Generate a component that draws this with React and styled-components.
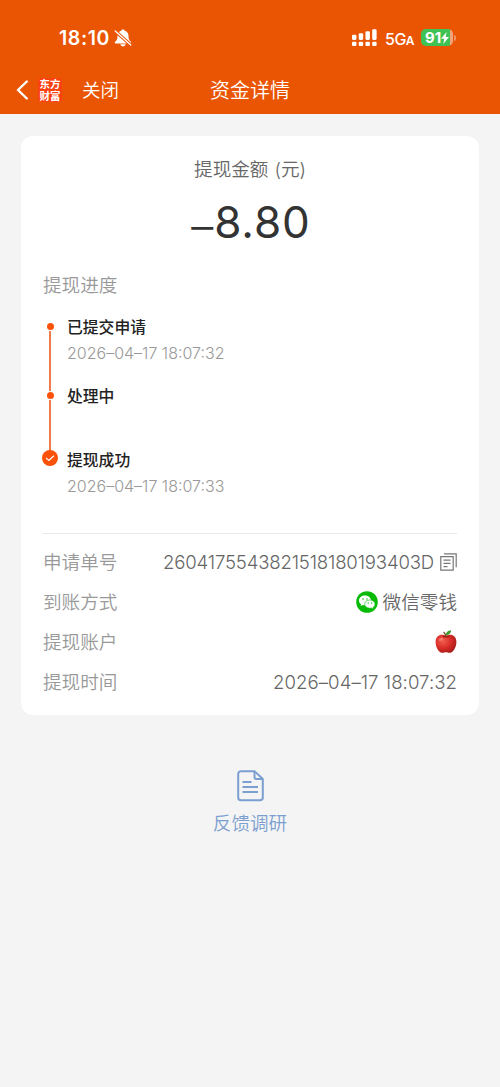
import React from 'react'
import styled, { createGlobalStyle } from 'styled-components'

const GlobalStyle = createGlobalStyle`
  * {
    box-sizing: border-box;
  }
  body {
    margin: 0;
    background: #f4f4f4;
    font-family: Inter, "Noto Sans CJK SC", sans-serif;
  }
  svg {
    display: block;
    flex: none;
  }
`

const Page = styled.div`
  min-height: 1087px;
  background: #f4f4f4;
`

const Header = styled.header`
  height: 114px;
  background: #ea5504;
  color: #fff;
`

const StatusBar = styled.div`
  display: flex;
  align-items: center;
  height: 64px;
  padding: 11px 44px 0 59px;
`

const Clock = styled.span`
  width: 52px;
  margin-right: 3px;
  font-size: 19.5px;
  font-weight: 600;
  letter-spacing: 0.6px;
  white-space: nowrap;
`

const StatusRight = styled.div`
  display: flex;
  align-items: center;
  margin-left: auto;
`

const Network = styled.span`
  width: 28px;
  margin: 2px 8px 0 8px;
  font-size: 16px;
  font-weight: 500;
  letter-spacing: -0.5px;
  white-space: nowrap;

  small {
    font-size: 12px;
    font-weight: 600;
  }
`

const Battery = styled.div`
  display: flex;
  align-items: center;
  justify-content: center;
  width: 32px;
  height: 17px;
  border-radius: 5px;
  background: linear-gradient(90deg, #3fc254 91%, #f0a27a 91%);
  font-size: 15px;
  font-weight: 700;
  letter-spacing: -0.2px;
`

const BatteryCap = styled.i`
  width: 2px;
  height: 6px;
  margin-left: 1px;
  border-radius: 0 2px 2px 0;
  background: #f0935f;
`

const NavBar = styled.nav`
  display: grid;
  grid-template-columns: 1fr auto 1fr;
  align-items: center;
  height: 50px;
  padding: 0 16px;
`

const NavLeft = styled.div`
  display: flex;
  align-items: center;
  padding-top: 1px;
`

const Logo = styled.div`
  display: flex;
  flex-direction: column;
  align-items: center;
  justify-content: center;
  width: 24px;
  height: 24px;
  margin: 0 20px 0 9px;
  border-radius: 4px;
  background: #fb4011;
  font-family: "Noto Sans CJK SC", sans-serif;
  font-size: 10.5px;
  font-weight: 700;
  white-space: nowrap;

  span {
    height: 11.5px;
    line-height: 11.5px;
  }
`

const Close = styled.span`
  font-size: 18.5px;
  font-weight: 350;
  line-height: 28px;
`

const Title = styled.h1`
  margin: 0;
  padding-top: 3px;
  font-size: 20px;
  font-weight: 350;
  line-height: 28px;
`

const Card = styled.main`
  height: 579px;
  margin: 22px 21px 0;
  padding: 0 22px;
  border-radius: 12px;
  background: #fff;
`

const AmountLabel = styled.div`
  display: flex;
  justify-content: center;
  gap: 6px;
  height: 66px;
  color: #666;
  font-size: 18.6px;
  font-weight: 350;
  line-height: 66px;
`

const Amount = styled.div`
  height: 40px;
  padding-left: 2px;
  color: #333;
  font-size: 44px;
  line-height: 40px;
  letter-spacing: 0.9px;
  text-align: center;
`

const Minus = styled.span`
  font-weight: 350;
  line-height: 0;
  vertical-align: -4px;
`

const SectionTitle = styled.h2`
  height: 30px;
  margin: 28px 0 14px;
  color: #999;
  font-size: 18.6px;
  font-weight: 350;
  line-height: 30px;
`

const Timeline = styled.div`
  height: 219px;
`

const Step = styled.div`
  display: flex;
  height: ${(p) => p.$height}px;
`

const Marker = styled.div`
  display: flex;
  flex-direction: column;
  align-items: center;
  width: 14px;
  margin-right: 10px;
  padding-top: ${(p) => (p.$done ? 3 : 9)}px;
`

const Dot = styled.i`
  width: 7px;
  height: 7px;
  border-radius: 50%;
  background: #fc5108;
`

const Line = styled.i`
  flex: 1;
  width: 1.5px;
  margin: 1px 0 ${(p) => (p.$last ? -4 : -8)}px;
  background: #f17b4b;
`

const StepTitle = styled.div`
  height: 26px;
  color: #222;
  font-size: 15.8px;
  font-weight: 500;
  line-height: 28px;
`

const StepTime = styled.div`
  color: #999;
  font-size: 16px;
  font-weight: 300;
  line-height: 26px;
`

const Details = styled.dl`
  margin: 0;
  padding-top: 8px;
  border-top: 1px solid #e8e8e8;
`

const Row = styled.div`
  display: flex;
  align-items: center;
  justify-content: space-between;
  height: 40px;
  font-size: 18.6px;
  font-weight: 350;
`

const Label = styled.dt`
  color: #999;
  line-height: 26px;
  padding-bottom: 1px;
`

const Value = styled.dd`
  display: flex;
  align-items: center;
  gap: ${(p) => p.$gap || 5}px;
  margin: 0;
  color: #666;
  letter-spacing: ${(p) => p.$spacing || 0}px;
`

const Method = styled.span`
  padding-bottom: 1px;
  line-height: 26px;
`

const Feedback = styled.a`
  display: flex;
  flex-direction: column;
  align-items: center;
  margin-top: 55px;
  color: #7b9fd0;
  font-size: 18.6px;
  font-weight: 350;
  line-height: 29px;

  svg {
    margin-bottom: 7px;
  }
`

const BellOff = () => (
  <svg width="18" height="18" viewBox="0 0 18 18">
    <path d="M9 .6c-1 0-1.600.5-1.700 1.200C4.600 2.700 3.500 4.600 3.500 7.200c0 3-.7 4.100-2.400 5.500-.6.6-.4 1.700.6 1.700h14.600c1 0 1.200-1.100.6-1.700C15.200 11.300 14.500 10.200 14.500 7.200c0-2.600-1.100-4.500-3.800-5.400C10.600 1.100 10 .6 9 .6z" fill="#fff" />
    <path d="M6.400 15.300h5.200c-.3 1.300-1.300 2.100-2.600 2.100s-2.300-.8-2.600-2.100z" fill="#fff" />
    <path d="M.5 1.500l17 15" stroke="#ea5504" strokeWidth="3.200" />
    <path d="M1.200 1.900l15.600 14.200" stroke="#fff" strokeWidth="1.300" strokeLinecap="round" />
  </svg>
)

const signalBars = [
  { x: 0, y: 5.5 },
  { x: 7, y: 4 },
  { x: 14, y: 2 },
  { x: 21, y: 0 },
]

const Signal = () => (
  <svg width="25" height="18" viewBox="0 0 26 18" fill="#fff">
    {signalBars.map((b) => (
      <React.Fragment key={b.x}>
        <rect x={b.x} y={b.y} width="4.600" height={11 - b.y} rx="1.200" />
        <rect x={b.x} y="12.800" width="4.600" height="4.600" rx="1.200" />
      </React.Fragment>
    ))}
  </svg>
)

const Bolt = () => (
  <svg width="8" height="12" viewBox="0 0 8 12">
    <path d="M5.600 0L0 6.800h3.200L2.300 12 8 5H4.700z" fill="#fff" />
  </svg>
)

const Back = () => (
  <svg width="13" height="20" viewBox="0 0 13 20" fill="none">
    <path d="M10.800 1.500L2 10l8.800 8.500" stroke="#fff" strokeWidth="2.400" strokeLinecap="round" strokeLinejoin="round" />
  </svg>
)

const Check = () => (
  <svg width="16" height="16" viewBox="0 0 16 16" fill="none">
    <circle cx="8" cy="8" r="8" fill="#fc5108" />
    <path d="M4.200 8l2.700 2.500 5-4.700" stroke="#fff" strokeWidth="1.200" />
  </svg>
)

const Copy = () => (
  <svg width="17" height="18" viewBox="0 0 17 18" fill="none" stroke="#777" strokeWidth="1.200">
    <path d="M4 .8h12.200v13.400" />
    <path d="M.8 3.600h12.400v13.600H.8z" />
    <path d="M3.500 7.200h7M3.500 10.400h7M3.500 13.600h4" />
  </svg>
)

const WeChat = () => (
  <svg width="22" height="22" viewBox="0 0 22 22">
    <circle cx="11" cy="11" r="10.800" fill="#09bb07" />
    <path d="M9 4.600c-3.400 0-6 2.100-6 4.900 0 1.600.8 2.900 2.100 3.800l-.5 1.800 2.100-1.100c.7.2 1.500.3 2.300.3 3.400 0 6-2.100 6-4.800S12.400 4.600 9 4.600z" fill="#fff" />
    <path d="M13.900 9c-3 0-5.200 1.800-5.200 4.100s2.200 4.100 5.200 4.100c.6 0 1.300-.1 1.800-.2l1.800.9-.4-1.500c1.200-.8 1.900-1.900 1.900-3.300 0-2.300-2.200-4.100-5.100-4.100z" fill="#fff" stroke="#09bb07" strokeWidth=".6" />
    <g fill="#09bb07">
      <circle cx="7" cy="8" r=".75" />
      <circle cx="11" cy="8" r=".75" />
      <circle cx="12.200" cy="12" r=".65" />
      <circle cx="15.600" cy="12" r=".65" />
    </g>
  </svg>
)

const Apple = () => (
  <svg width="22" height="24" viewBox="0 0 22 24">
    <defs>
      <radialGradient id="skin" cx=".35" cy=".35" r=".75">
        <stop offset="0" stopColor="#f2604f" />
        <stop offset=".5" stopColor="#db2f2a" />
        <stop offset="1" stopColor="#a31a15" />
      </radialGradient>
    </defs>
    <path d="M11 6C7.500 3.400.6 4.200.6 11.900c0 5.500 3.400 10.900 7 10.900 1.500 0 2-.5 3.400-.5s1.900.5 3.400.5c3.600 0 7-5.400 7-10.900C21.400 4.200 14.500 3.400 11 6z" fill="url(#skin)" />
    <ellipse cx="11" cy="6.500" rx="3.600" ry="1.100" fill="#a81c14" />
    <path d="M11 7C10.900 5 9.900 3.300 8.600 2" stroke="#6b4421" strokeWidth="1.200" fill="none" />
    <path d="M10.900 5.200C10.700 2.400 12.800.7 16 .3c.1 2.800-1.800 4.900-5.100 4.900z" fill="#3d9a2d" />
    <ellipse cx="6" cy="9.300" rx="2.200" ry="1.200" fill="#ffb6a8" opacity=".5" transform="rotate(-25 6 9.300)" />
  </svg>
)

const Document = () => (
  <svg width="27" height="32" viewBox="0 0 27 32" fill="none" stroke="#7b9fd0" strokeWidth="2" strokeLinejoin="round">
    <path d="M17.500 1.200H4A2.800 2.800 0 0 0 1.200 4v23.500A2.800 2.800 0 0 0 4 30.300h19a2.800 2.800 0 0 0 2.800-2.800V9z" />
    <path d="M17.500 1.200V7a2 2 0 0 0 2 2h6.300" />
    <path d="M5.500 12h9M5.500 17h15.500M5.500 22h15.500" />
  </svg>
)

const steps = [
  { title: '已提交申请', time: '2026–04–17 18:07:32', height: 69 },
  { title: '处理中', height: 64 },
  { title: '提现成功', time: '2026–04–17 18:07:33', height: 52, done: true },
]

const App = () => {
  return (
    <Page>
      <GlobalStyle />
      <Header>
        <StatusBar>
          <Clock>18:10</Clock>
          <BellOff />
          <StatusRight>
            <Signal />
            <Network>5G<small>A</small></Network>
            <Battery>91<Bolt /></Battery>
            <BatteryCap />
          </StatusRight>
        </StatusBar>
        <NavBar>
          <NavLeft>
            <Back />
            <Logo>
              <span>东方</span>
              <span>财富</span>
            </Logo>
            <Close>关闭</Close>
          </NavLeft>
          <Title>资金详情</Title>
        </NavBar>
      </Header>

      <Card>
        <AmountLabel><span>提现金额</span><span>(元)</span></AmountLabel>
        <Amount><Minus>–</Minus>8.80</Amount>
        <SectionTitle>提现进度</SectionTitle>
        <Timeline>
          {steps.map((step, i) => (
            <Step key={step.title} $height={step.height}>
              <Marker $done={step.done}>
                {step.done ? <Check /> : <Dot />}
                {!step.done && <Line $last={i === steps.length - 2} />}
              </Marker>
              <div>
                <StepTitle>{step.title}</StepTitle>
                {step.time && <StepTime>{step.time}</StepTime>}
              </div>
            </Step>
          ))}
        </Timeline>
        <Details>
          <Row>
            <Label>申请单号</Label>
            <Value $spacing={-0.18} $gap={6}>2604175543821518180193403D<Copy /></Value>
          </Row>
          <Row>
            <Label>到账方式</Label>
            <Value><WeChat /><Method>微信零钱</Method></Value>
          </Row>
          <Row>
            <Label>提现账户</Label>
            <Value><Apple /></Value>
          </Row>
          <Row>
            <Label>提现时间</Label>
            <Value $spacing={0.05}>2026–04–17 18:07:32</Value>
          </Row>
        </Details>
      </Card>

      <Feedback>
        <Document />
        反馈调研
      </Feedback>
    </Page>
  )
}

export default App
